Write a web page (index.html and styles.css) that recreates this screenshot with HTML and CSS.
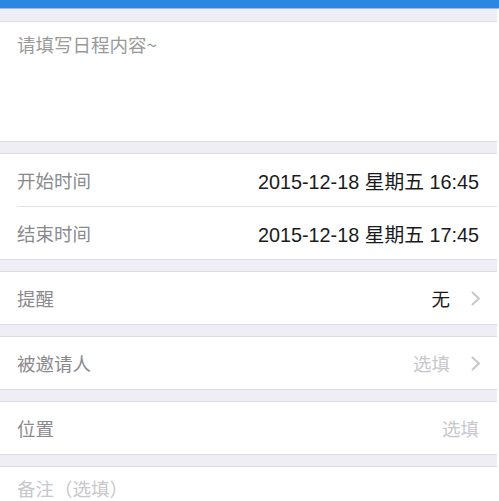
FILE: index.html
```html
<!DOCTYPE html>
<html lang="zh-CN">
<head>
<meta charset="utf-8">
<link rel="stylesheet" href="styles.css">
</head>
<body>
<div class="topbar"></div>
<div class="page">
  <div class="section first">
    <div class="textarea">请填写日程内容~</div>
  </div>
  <div class="section">
    <div class="row">
      <span class="label">开始时间</span>
      <span class="value dark">2015-12-18 星期五 16:45</span>
    </div>
    <div class="sep"></div>
    <div class="row">
      <span class="label">结束时间</span>
      <span class="value dark">2015-12-18 星期五 17:45</span>
    </div>
  </div>
  <div class="section">
    <div class="row chevrow">
      <span class="label">提醒</span>
      <span class="value dark cjk">无</span>
      <svg class="chev" width="10" height="15" viewBox="0 0 10 15"><path d="M1.5 1.5 L8 7.5 L1.5 13.5" fill="none" stroke="#c7c7cc" stroke-width="2" stroke-linecap="round" stroke-linejoin="round"/></svg>
    </div>
  </div>
  <div class="section">
    <div class="row chevrow">
      <span class="label">被邀请人</span>
      <span class="value light">选填</span>
      <svg class="chev" width="10" height="15" viewBox="0 0 10 15"><path d="M1.5 1.5 L8 7.5 L1.5 13.5" fill="none" stroke="#c7c7cc" stroke-width="2" stroke-linecap="round" stroke-linejoin="round"/></svg>
    </div>
  </div>
  <div class="section">
    <div class="row">
      <span class="label">位置</span>
      <span class="value light">选填</span>
    </div>
  </div>
  <div class="section last">
    <div class="note">备注（选填）</div>
  </div>
</div>
</body>
</html>
```

FILE: styles.css
```css
html, body {
  margin: 0;
  padding: 0;
  background: #ffffff;
}
body {
  font-family: "Liberation Sans", "Noto Sans CJK SC", sans-serif;
  font-size: 18.5px;
  color: #1c1c1c;
  overflow: hidden;
  height: 501px;
}
.topbar {
  height: 8px;
  background: #2b87e2;
  border-bottom: 1px solid #8fc1ef;
}
.page {
  width: 497px;
  background: #efeef4;
  padding-top: 12px;
}
.section {
  background: #ffffff;
  border-top: 1px solid #dcdbe1;
  border-bottom: 1px solid #dcdbe1;
  margin-bottom: 11px;
}
.section.last {
  margin-bottom: 0;
  height: 40px;
  border-bottom: none;
}
.textarea {
  height: 119px;
  box-sizing: border-box;
  padding: 11px 17px 0;
  color: #9a9a9a;
  line-height: 22px;
  font-family: "Noto Sans CJK SC", sans-serif;
}
.row {
  height: 52px;
  display: flex;
  align-items: center;
  padding: 0 18px 0 17px;
}
.row.chevrow {
  padding-right: 16px;
}
.label {
  flex: 1;
  color: #8a8a8e;
  font-family: "Noto Sans CJK SC", sans-serif;
}
.value {
  white-space: nowrap;
}
.value.dark {
  color: #1a1a1a;
  font-size: 19.8px;
}
.value.dark.cjk {
  font-size: 18.5px;
}
.value.light {
  color: #c7c7cc;
  font-family: "Noto Sans CJK SC", sans-serif;
}
.chev {
  margin-left: 21px;
  flex: none;
}
.sep {
  height: 1px;
  background: #e3e3e7;
  margin-left: 17px;
}
.note {
  padding: 10px 17px 0;
  color: #c7c7cc;
  line-height: 22px;
  font-family: "Noto Sans CJK SC", sans-serif;
}
```
